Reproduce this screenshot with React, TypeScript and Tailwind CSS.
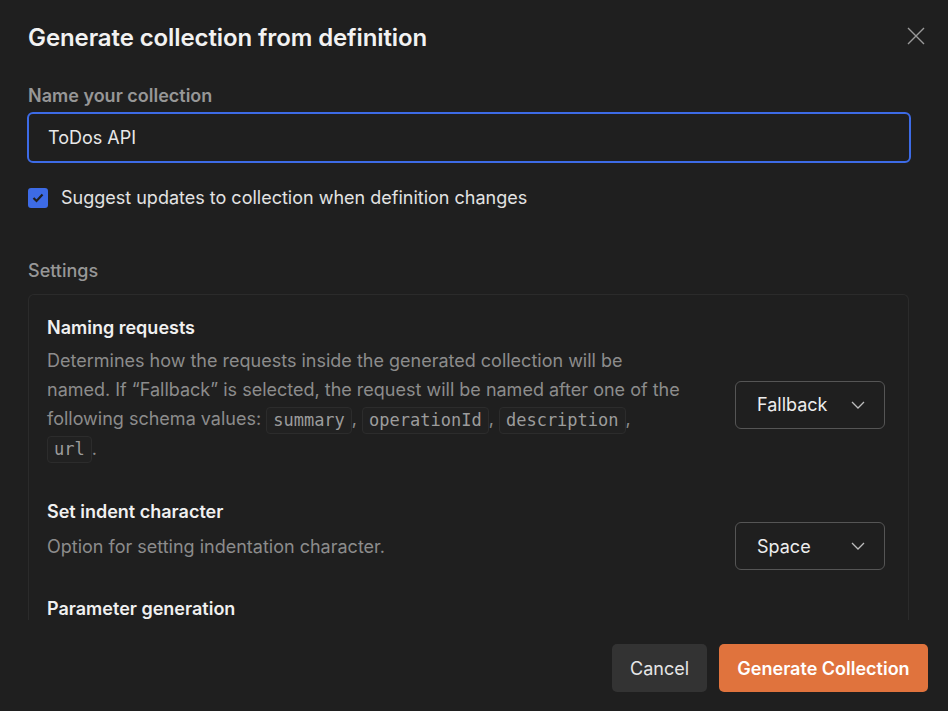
function Code({ children }: { children: React.ReactNode }) {
  return (
    <code className="inline-block rounded-[4px] border border-[#2c2c2c] bg-[#212121] px-[6px] font-['DejaVu_Sans_Mono',monospace] text-[17px] leading-[25px] text-[#9c9c9c] align-middle">
      {children}
    </code>
  )
}

function Chevron() {
  return (
    <svg width="14" height="8" viewBox="0 0 14 8" fill="none">
      <polyline points="1,1 7,7 13,1" stroke="#bdbdbd" strokeWidth="1.3" />
    </svg>
  )
}

function Select({ value }: { value: string }) {
  return (
    <div className="flex h-[48px] w-[150px] shrink-0 items-center justify-between rounded-[6px] border border-[#555555] pl-[21px] pr-[19px] text-[18px] text-[#ededed]">
      <span>{value}</span>
      <Chevron />
    </div>
  )
}

export default function App() {
  return (
    <div className="flex h-[711px] w-[948px] flex-col overflow-hidden bg-[#1f1f1f] font-['Inter','Noto_Sans',sans-serif]">
      <div className="flex items-start justify-between pl-[28px] pr-[23px] pt-[23px]">
        <h1 className="text-[24px] font-semibold leading-[30px] tracking-[-0.1px] text-[#f2f2f2]">
          Generate collection from definition
        </h1>
        <button className="mt-[4px] text-[#9a9a9a]">
          <svg width="18" height="18" viewBox="0 0 18 18" fill="none">
            <path d="M1 1L17 17M17 1L1 17" stroke="currentColor" strokeWidth="1.4" />
          </svg>
        </button>
      </div>

      <div className="min-h-0 flex-1 overflow-hidden px-[28px] pt-[31px]">
        <div className="text-[18px] font-semibold leading-[24px] text-[#979797]">Name your collection</div>
        <div className="mt-[4px] flex h-[51px] w-[884px] -ml-[1px] items-center rounded-[6px] border-2 border-[#3d6be6] px-[19px] text-[18px] text-[#e8e8e8]">
          ToDos API
        </div>

        <div className="mt-[23px] flex items-center gap-[13px]">
          <div className="flex h-[20px] w-[20px] items-center justify-center rounded-[3px] bg-[#3d6be6]">
            <svg width="12" height="10" viewBox="0 0 12 10" fill="none">
              <polyline points="1.5,5 4.5,8 10.5,1.5" stroke="#1f1f1f" strokeWidth="2.2" />
            </svg>
          </div>
          <span className="text-[18px] leading-[24px] text-[#e3e3e3]">
            Suggest updates to collection when definition changes
          </span>
        </div>

        <div className="mt-[49px] text-[18px] font-medium leading-[24px] text-[#979797]">Settings</div>

        <div className="mt-[11px] w-[881px] rounded-t-[6px] border border-b-0 border-[#2b2b2b] pb-[40px] pl-[18px] pr-[23px] pt-[21px]">
          <div className="text-[18px] font-semibold leading-[24px] text-[#f0f0f0]">Naming requests</div>
          <div className="mt-[6px] flex items-center justify-between">
            <p className="w-[660px] text-[18px] leading-[29px] text-[#8c8c8c]">
              Determines how the requests inside the generated collection will be
              <br />
              named. If “Fallback” is selected, the request will be named after one of the
              <br />
              following schema values: <Code>summary</Code>, <Code>operationId</Code>, <Code>description</Code>,
              <br />
              <Code>url</Code>.
            </p>
            <Select value="Fallback" />
          </div>

          <div className="mt-[37px] text-[18px] font-semibold leading-[24px] text-[#f0f0f0]">Set indent character</div>
          <div className="-mt-[2px] flex items-center justify-between">
            <p className="text-[18px] leading-[29px] text-[#8c8c8c]">Option for setting indentation character.</p>
            <Select value="Space" />
          </div>

          <div className="mt-[27px] text-[18px] font-semibold leading-[24px] text-[#f0f0f0]">Parameter generation</div>
        </div>
      </div>

      <div className="flex h-[91px] shrink-0 items-start justify-end gap-[12px] pr-[20px] pt-[24px]">
        <button className="h-[48px] w-[95px] rounded-[5px] bg-[#333333] text-[18px] text-[#e6e6e6]">Cancel</button>
        <button className="h-[48px] w-[209px] rounded-[5px] bg-[#e0733d] text-[18px] font-semibold text-white">
          Generate Collection
        </button>
      </div>
    </div>
  )
}
